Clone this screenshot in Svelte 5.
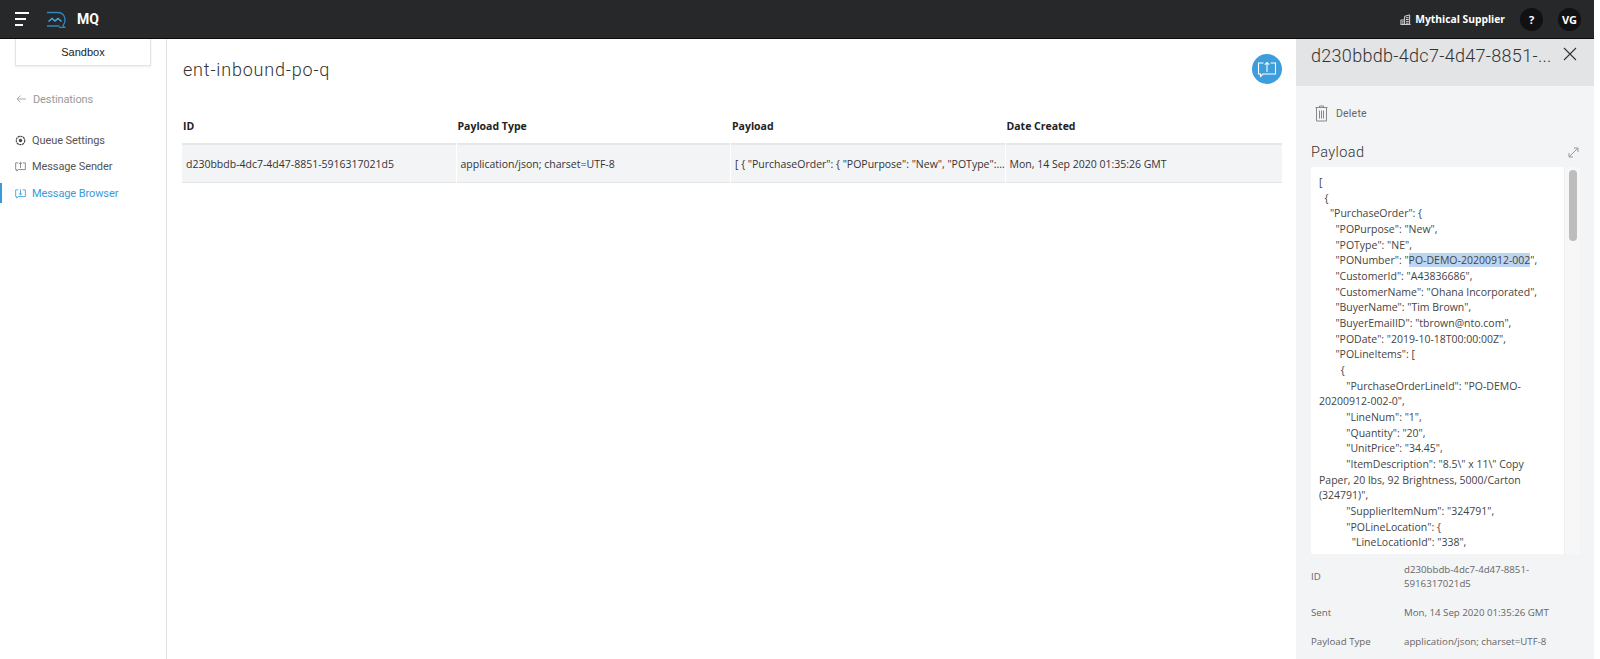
<script>
  const messageId = 'd230bbdb-4dc7-4d47-8851-5916317021d5';
  const sent = 'Mon, 14 Sep 2020 01:35:26 GMT';
  const payloadType = 'application/json; charset=UTF-8';
</script>

<div class="page">
  <header class="topbar">
    <button class="burger" aria-label="Menu">
      <span class="l1"></span><span class="l2"></span><span class="l3"></span>
    </button>
    <svg class="logo" viewBox="0 0 20 17" width="20" height="17" fill="none" stroke="#2f86c1" stroke-width="1.3">
      <path d="M1 1.5 H12 C16 1.5 19 4.5 19 8.5 C19 11 18.3 13 17 14.5 L18.5 16.3 H13 M1 15 H13.5" />
      <path d="M2.5 10.5 L6 7.5 L9 10 L12 7.5 L15.5 10.5" stroke="#4aa6e6" stroke-width="1.6" />
    </svg>
    <span class="product">MQ</span>
    <span class="spacer"></span>
    <svg class="building" viewBox="0 0 12 12" width="11" height="11" fill="none" stroke="#e4e4e4" stroke-width="1">
      <path d="M.5 11.5 H11.5 M1 11 V6.5 H5 M5 11 V2.5 L10.5 1 V11" />
      <path d="M6.5 4 H9.5 M6.5 6 H9.5 M6.5 8 H9.5 M6.5 10 H9.5 M2 8.5 H4 M2 10 H4" />
    </svg>
    <span class="org">Mythical Supplier</span>
    <span class="round q">?</span>
    <span class="round vg">VG</span>
  </header>

  <div class="body">
    <nav class="sidebar">
      <div class="env">Sandbox</div>
      <a class="back">
        <svg viewBox="0 0 10 10" width="10" height="10" fill="none" stroke="#aaa" stroke-width="1"><path d="M10 5 H1 M4.5 1.5 L1 5 L4.5 8.5" /></svg>
        Destinations
      </a>
      <ul>
        <li>
          <svg viewBox="0 0 12 12" width="11" height="11" fill="none" stroke="#444" stroke-width="1"><circle cx="6" cy="6" r="4.6" stroke-dasharray="2.4 .6" stroke-width="1.3" /><circle cx="6" cy="6" r="1.8" fill="#444" stroke="none" /></svg>
          Queue Settings
        </li>
        <li>
          <svg viewBox="0 0 12 12" width="11" height="11" fill="none" stroke="#777" stroke-width=".9"><path d="M3.5 2 H.7 V9.3 H2 V11 L3.8 9.3 H11.3 V2 H8.5 M6 7.5 V1.5 M4.2 3.2 L6 1.5 L7.8 3.2" /></svg>
          Message Sender
        </li>
        <li class="active">
          <svg viewBox="0 0 12 12" width="11" height="11" fill="none" stroke="#3a9ad9" stroke-width=".9"><path d="M3.5 2 H.7 V9.3 H2 V11 L3.8 9.3 H11.3 V2 H8.5 M6 1.5 V7.5 M4.2 5.8 L6 7.5 L7.8 5.8" /></svg>
          Message Browser
        </li>
      </ul>
    </nav>

    <main class="main">
      <div class="titlerow">
        <h1>ent-inbound-po-q</h1>
        <button class="send" aria-label="Send message">
          <svg viewBox="0 0 20 17" width="20" height="17" fill="none" stroke="#fff" stroke-width="1.1"><path d="M6.5 2 H1.5 V13 H3.5 V15.5 L6 13 H18.5 V2 H13.5 M10 11 V1.5 M7.8 3.7 L10 1.5 L12.2 3.7" /></svg>
        </button>
      </div>
      <div class="table">
        <div class="th">ID</div>
        <div class="th">Payload Type</div>
        <div class="th">Payload</div>
        <div class="th">Date Created</div>
        <div class="td">{messageId}</div>
        <div class="td">{payloadType}</div>
        <div class="td">[ &#123; "PurchaseOrder": &#123; "POPurpose": "New", "POType":...</div>
        <div class="td">{sent}</div>
      </div>
    </main>

    <aside class="panel">
      <div class="panelhead">
        <span class="paneltitle">d230bbdb-4dc7-4d47-8851-...</span>
        <svg class="close" viewBox="0 0 14 14" width="14" height="14" fill="none" stroke="#333" stroke-width="1.1"><path d="M1 1 L13 13 M13 1 L1 13" /></svg>
      </div>
      <div class="panelbody">
        <div class="delete">
          <svg viewBox="0 0 13 17" width="13" height="17" fill="none" stroke="#888" stroke-width="1"><path d="M.5 2.5 H12.5 M4.5 2.5 V1 H8.5 V2.5 M1.5 2.5 V16 H11.5 V2.5 M4.5 5.5 V13.5 M6.5 5.5 V13.5 M8.5 5.5 V13.5" /></svg>
          <span>Delete</span>
        </div>
        <div class="payloadhead">
          <span>Payload</span>
          <svg viewBox="0 0 11 11" width="11" height="11" fill="none" stroke="#999" stroke-width="1"><path d="M1 10 L10 1 M6 1 H10 V5 M1 6 V10 H5" /></svg>
        </div>
        <div class="codebox">
          <pre class="code">[
  &#123;
    "PurchaseOrder": &#123;
      "POPurpose": "New",
      "POType": "NE",
      "PONumber": "<mark>PO-DEMO-20200912-002</mark>",
      "CustomerId": "A43836686",
      "CustomerName": "Ohana Incorporated",
      "BuyerName": "Tim Brown",
      "BuyerEmailID": "tbrown@nto.com",
      "PODate": "2019-10-18T00:00:00Z",
      "POLineItems": [
        &#123;
          "PurchaseOrderLineId": "PO-DEMO-20200912-002-0",
          "LineNum": "1",
          "Quantity": "20",
          "UnitPrice": "34.45",
          "ItemDescription": "8.5\" x 11\" Copy Paper, 20 lbs, 92 Brightness, 5000/Carton (324791)",
          "SupplierItemNum": "324791",
          "POLineLocation": &#123;
            "LineLocationId": "338",</pre>
          <div class="track"><div class="thumb"></div></div>
        </div>
        <dl class="meta">
          <dt>ID</dt><dd>{messageId}</dd>
          <dt>Sent</dt><dd>{sent}</dd>
          <dt>Payload Type</dt><dd>{payloadType}</dd>
        </dl>
      </div>
    </aside>
  </div>
</div>

<style>
  :global(body) {
    margin: 0;
    background: #fff;
  }
  .page {
    width: 1594px;
    height: 659px;
    overflow: hidden;
    font-family: "Open Sans", sans-serif;
    color: #444;
  }
  .topbar {
    height: 39px;
    box-sizing: border-box;
    background: #26282a;
    border-bottom: 1px solid #0c0c0c;
    display: flex;
    align-items: center;
    padding-left: 15px;
    color: #fff;
  }
  .burger {
    width: 15px;
    padding: 0;
    border: 0;
    background: none;
    display: flex;
    flex-direction: column;
    gap: 4px;
  }
  .burger span {
    display: block;
    height: 2px;
    background: #fff;
  }
  .burger .l1 { width: 14px; }
  .burger .l2 { width: 11px; }
  .burger .l3 { width: 8px; }
  .logo {
    margin-left: 16px;
  }
  .product {
    margin-left: 11px;
    font-family: Roboto, sans-serif;
    font-weight: 700;
    font-size: 14px;
  }
  .spacer {
    flex: 1;
  }
  .org {
    margin-left: 4px;
    font-size: 10.3px;
    font-weight: 700;
  }
  .round {
    width: 23px;
    height: 23px;
    border-radius: 50%;
    background: #111;
    display: flex;
    align-items: center;
    justify-content: center;
    font-size: 11px;
    font-weight: 700;
  }
  .q { margin-left: 15px; }
  .vg { margin: 0 13px 0 15px; }

  .body {
    display: flex;
    height: 620px;
  }
  .sidebar {
    width: 167px;
    flex: none;
    box-sizing: border-box;
    border-right: 1px solid #e2e3e5;
    font-family: Roboto, sans-serif;
    font-size: 11px;
    letter-spacing: -0.1px;
    color: #555;
  }
  .env {
    margin: 0 15px 0 15px;
    height: 27px;
    box-sizing: border-box;
    background: #fff;
    border: 1px solid #e4e4e4;
    border-top: 0;
    box-shadow: 0 1px 2px rgba(0, 0, 0, 0.08);
    display: flex;
    align-items: center;
    justify-content: center;
    font-family: "Liberation Sans", sans-serif;
    font-size: 11px;
    letter-spacing: 0;
    color: #222;
  }
  .back {
    display: flex;
    align-items: center;
    gap: 7px;
    margin: 25px 0 0 16px;
    height: 16px;
    color: #999;
  }
  ul {
    list-style: none;
    margin: 23px 0 0;
    padding: 0;
  }
  li {
    display: flex;
    align-items: center;
    gap: 6px;
    height: 20px;
    margin-bottom: 6.5px;
    padding-left: 15px;
    box-sizing: border-box;
  }
  li.active {
    color: #3a9ad9;
    border-left: 2px solid #3a9ad9;
    padding-left: 13px;
  }

  .main {
    width: 1129px;
    flex: none;
    box-sizing: border-box;
    padding: 0 14px 0 15px;
  }
  .titlerow {
    display: flex;
    justify-content: space-between;
    align-items: center;
    height: 60px;
  }
  h1 {
    margin: 0 0 0 1px;
    font-family: Roboto, sans-serif;
    font-weight: 300;
    font-size: 18px;
    letter-spacing: 0.8px;
    color: #333;
  }
  .send {
    width: 30px;
    height: 30px;
    padding: 0;
    border: 0;
    border-radius: 50%;
    background: #3e9ddc;
    display: flex;
    align-items: center;
    justify-content: center;
  }
  .table {
    display: grid;
    grid-template-columns: 274.5px 274.5px 274.5px 1fr;
    margin-top: 8px;
  }
  .th {
    height: 38px;
    box-sizing: border-box;
    padding: 12px 0 0 1px;
    border-bottom: 2px solid #e6e7e9;
    font-size: 10.5px;
    font-weight: 700;
    color: #222;
    margin-right: 1px;
  }
  .td {
    height: 38px;
    box-sizing: border-box;
    padding: 0 4px;
    display: flex;
    align-items: center;
    background: #f3f4f6;
    border-bottom: 1px solid #e3e4e6;
    font-size: 10.5px;
    color: #333;
    margin-right: 1px;
    white-space: nowrap;
  }
  .td:last-child, .th:nth-child(4) {
    margin-right: 0;
  }

  .panel {
    width: 298px;
    flex: none;
    background: #f3f4f6;
    display: flex;
    flex-direction: column;
  }
  .panelhead {
    height: 47px;
    flex: none;
    box-sizing: border-box;
    padding: 6px 17px 0 15px;
    background: #e3e4e6;
    display: flex;
    align-items: flex-start;
    justify-content: space-between;
  }
  .paneltitle {
    white-space: nowrap;
    font-family: Roboto, sans-serif;
    font-weight: 300;
    font-size: 18px;
    letter-spacing: 0.3px;
    color: #333;
  }
  .close {
    margin-top: 2px;
  }
  .panelbody {
    padding: 19px 14px 0 15px;
  }
  .delete {
    display: flex;
    align-items: center;
    gap: 8px;
    padding-left: 4px;
    font-family: Roboto, sans-serif;
    font-size: 10.5px;
    letter-spacing: 0.2px;
    color: #666;
  }
  .payloadhead {
    display: flex;
    align-items: center;
    justify-content: space-between;
    margin-top: 22px;
    padding-right: 1px;
    font-family: Roboto, sans-serif;
    font-weight: 300;
    font-size: 14.5px;
    letter-spacing: 0.4px;
    color: #333;
  }
  .codebox {
    display: flex;
    height: 387px;
    margin-top: 6px;
    overflow: hidden;
    background: #fff;
    border-radius: 2px;
  }
  .code {
    flex: 1;
    margin: 0;
    padding: 8px 8px 0;
    font-family: "Open Sans", sans-serif;
    font-size: 10.5px;
    line-height: 15.67px;
    color: #444;
    white-space: pre-wrap;
    overflow-wrap: break-word;
  }
  mark {
    background: #bcd6f2;
    color: inherit;
  }
  .track {
    flex: none;
    width: 16px;
    background: #f7f7f7;
    border-left: 1px solid #eee;
    box-sizing: border-box;
    padding: 3px 3px 0 4px;
  }
  .thumb {
    height: 71px;
    border-radius: 5px;
    background: #bdbdbd;
  }
  .meta {
    display: grid;
    grid-template-columns: 93px 1fr;
    row-gap: 15px;
    margin: 9px 0 0;
    font-size: 9.7px;
    line-height: 14px;
    color: #666;
    align-items: center;
  }
  dd {
    margin: 0;
  }
</style>
